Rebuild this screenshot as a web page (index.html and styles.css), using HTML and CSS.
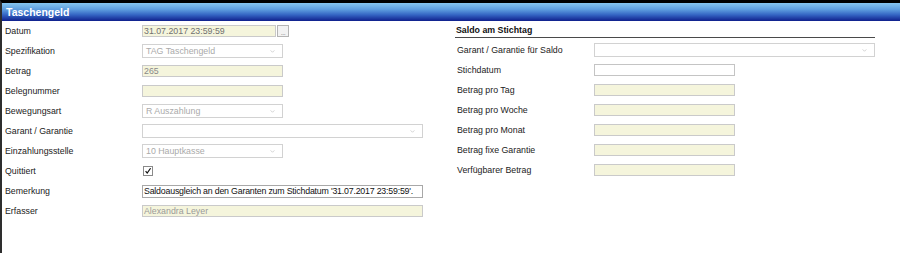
FILE: index.html
```html
<!DOCTYPE html>
<html lang="de">
<head>
<meta charset="utf-8">
<title>Taschengeld</title>
<link rel="stylesheet" href="styles.css">
</head>
<body>
<div class="window">
  <div class="titlebar">Taschengeld</div>
  <div class="form">
    <div class="col col-left">
      <div class="row"><span class="lbl">Datum</span><span class="fieldgroup"><span class="field ro w134 dark">31.07.2017 23:59:59</span><span class="btn">...</span></span></div>
      <div class="row"><span class="lbl">Spezifikation</span><span class="select dis w141">TAG Taschengeld<svg class="chev" viewBox="0 0 6 4"><path d="M0.5 0.5 L3 3 L5.5 0.5" fill="none" stroke="#bdbdbd" stroke-width="0.9"/></svg></span></div>
      <div class="row"><span class="lbl">Betrag</span><span class="field ro w141">265</span></div>
      <div class="row"><span class="lbl">Belegnummer</span><span class="field ro w141"></span></div>
      <div class="row"><span class="lbl">Bewegungsart</span><span class="select dis w141">R Auszahlung<svg class="chev" viewBox="0 0 6 4"><path d="M0.5 0.5 L3 3 L5.5 0.5" fill="none" stroke="#bdbdbd" stroke-width="0.9"/></svg></span></div>
      <div class="row"><span class="lbl">Garant / Garantie</span><span class="select w281"><svg class="chev" viewBox="0 0 6 4"><path d="M0.5 0.5 L3 3 L5.5 0.5" fill="none" stroke="#bdbdbd" stroke-width="0.9"/></svg></span></div>
      <div class="row"><span class="lbl">Einzahlungsstelle</span><span class="select dis w141">10 Hauptkasse<svg class="chev" viewBox="0 0 6 4"><path d="M0.5 0.5 L3 3 L5.5 0.5" fill="none" stroke="#bdbdbd" stroke-width="0.9"/></svg></span></div>
      <div class="row"><span class="lbl">Quittiert</span><span class="check"><svg viewBox="0 0 10 10"><path d="M2 5.2 L4 7.6 L8.2 1.6" fill="none" stroke="#111" stroke-width="1.5"/></svg></span></div>
      <div class="row"><span class="lbl">Bemerkung</span><span class="field edit w281 tall">Saldoausgleich an den Garanten zum Stichdatum '31.07.2017 23:59:59'.</span></div>
      <div class="row"><span class="lbl">Erfasser</span><span class="field ro w281 light">Alexandra Leyer</span></div>
    </div>
    <div class="col col-right">
      <div class="section-head">Saldo am Stichtag</div>
      <div class="row"><span class="lbl">Garant / Garantie für Saldo</span><span class="select w281"><svg class="chev" viewBox="0 0 6 4"><path d="M0.5 0.5 L3 3 L5.5 0.5" fill="none" stroke="#bdbdbd" stroke-width="0.9"/></svg></span></div>
      <div class="row"><span class="lbl">Stichdatum</span><span class="field white w141"></span></div>
      <div class="row"><span class="lbl">Betrag pro Tag</span><span class="field ro w141"></span></div>
      <div class="row"><span class="lbl">Betrag pro Woche</span><span class="field ro w141"></span></div>
      <div class="row"><span class="lbl">Betrag pro Monat</span><span class="field ro w141"></span></div>
      <div class="row"><span class="lbl">Betrag fixe Garantie</span><span class="field ro w141"></span></div>
      <div class="row"><span class="lbl">Verfügbarer Betrag</span><span class="field ro w141"></span></div>
    </div>
  </div>
</div>
</body>
</html>
```

FILE: styles.css
```css
* { box-sizing: border-box; }
html, body {
  margin: 0;
  padding: 0;
  background: #fff;
  font-family: "Liberation Sans", Arial, sans-serif;
}
.window {
  width: 900px;
  height: 253px;
  border-left: 2px solid #2e2e2e;
  border-top: 3px solid #000;
}
.titlebar {
  height: 18px;
  padding-left: 4px;
  color: #fff;
  font-weight: bold;
  font-size: 10.5px;
  line-height: 18px;
  background: linear-gradient(#86c6f0 0%, #5f9fe0 35%, #3566c4 65%, #0f1f8c 100%);
}
.form {
  display: flex;
}
.col-left {
  width: 453px;
  flex: none;
  padding-left: 3px;
}
.col-right {
  width: 420px;
  flex: none;
}
.row {
  display: grid;
  grid-template-columns: 137px auto;
  align-items: center;
  height: 20px;
  font-size: 8.8px;
  color: #222;
}
.col-right .row { grid-template-columns: 139px auto; }
.col-right .lbl { padding-left: 2px; }
.lbl {
  white-space: nowrap;
}
.section-head {
  height: 17px;
  line-height: 19px;
  margin-bottom: 2px;
  padding-left: 1px;
  border-bottom: 1px solid #4a4a4a;
  font-size: 8.8px;
  font-weight: bold;
  color: #111;
}
.fieldgroup {
  display: flex;
  align-items: center;
  gap: 1px;
}
.field {
  display: block;
  height: 12px;
  line-height: 10px;
  padding-left: 1px;
  border: 1px solid #cacaca;
  font-size: 8.8px;
  white-space: nowrap;
  overflow: hidden;
}
.field.ro { background: #f5f5dc; color: #888; }
.field.ro.dark { color: #707070; }
.field.ro.light { color: #9a9a9a; }
.field.white { background: #fff; border-color: #c4c4c4; }
.field.edit { background: #fff; color: #111; border-color: #a8a8a8; letter-spacing: -0.2px; }
.field.tall { height: 13px; line-height: 11px; }
.select {
  position: relative;
  display: block;
  height: 14px;
  line-height: 12px;
  padding-left: 3px;
  border: 1px solid #d2d2d2;
  background: #fff;
  color: #aaa;
  font-size: 8.8px;
  white-space: nowrap;
}
.chev {
  position: absolute;
  right: 7px;
  top: 5px;
  width: 5px;
  height: 3px;
}
.w134 { width: 134px; }
.w141 { width: 141px; }
.w281 { width: 281px; }
.btn {
  display: block;
  width: 12px;
  height: 12px;
  border: 1px solid #b4b4b4;
  background: #f2f2f2;
  color: #8a8a8a;
  font-size: 7px;
  line-height: 13px;
  letter-spacing: -0.5px;
  text-align: center;
}
.check {
  display: block;
  width: 10px;
  height: 10px;
  margin-left: 1px;
  border: 1px solid #8a8a8a;
  background: #fff;
}
.check svg { display: block; width: 8px; height: 8px; }
```
